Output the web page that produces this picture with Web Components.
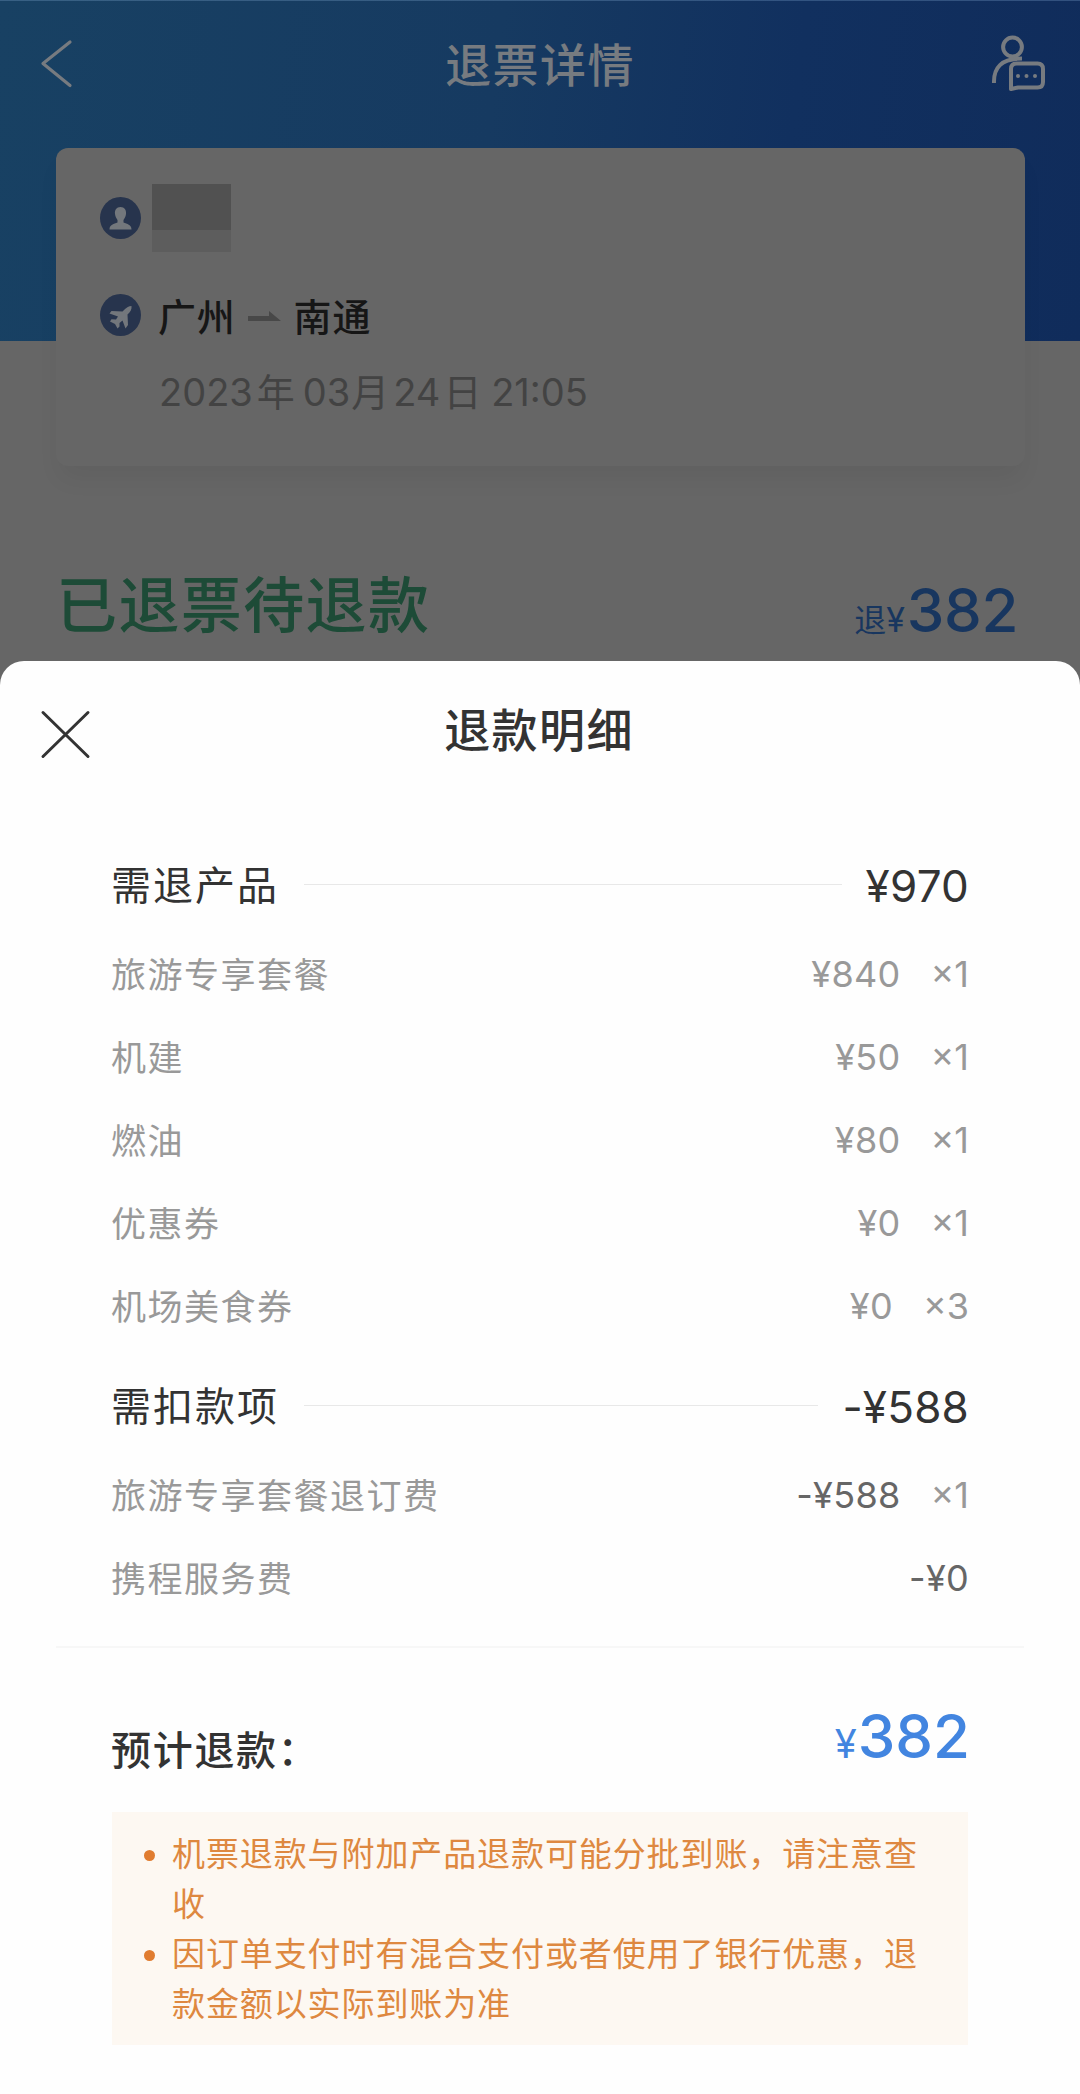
<!DOCTYPE html>
<html lang="zh-CN">
<head>
<meta charset="utf-8">
<title>退票详情</title>
<style>
  body {
    margin: 0;
    font-family: Inter, "Noto Sans CJK SC", sans-serif;
    color: #333;
  }
</style>
</head>
<body>
<refund-page>
  <page-header slot="header">退票详情</page-header>
  <trip-card slot="card">
    <span slot="from">广州</span>
    <span slot="to">南通</span>
  </trip-card>
  <refund-status slot="status" amount="382">已退票待退款</refund-status>

  <bottom-sheet heading="退款明细">
    <fee-group name="需退产品" total="¥970">
      <fee-row price="¥840" count="×1">旅游专享套餐</fee-row>
      <fee-row price="¥50" count="×1">机建</fee-row>
      <fee-row price="¥80" count="×1">燃油</fee-row>
      <fee-row price="¥0" count="×1">优惠券</fee-row>
      <fee-row price="¥0" count="×3">机场美食券</fee-row>
    </fee-group>
    <fee-group name="需扣款项" total="-¥588">
      <fee-row class="minus" price="-¥588" count="×1">旅游专享套餐退订费</fee-row>
      <fee-row class="minus" price="-¥0">携程服务费</fee-row>
    </fee-group>
    <fee-total amount="382">预计退款</fee-total>
    <notice-box>
      <notice-item>机票退款与附加产品退款可能分批到账，请注意查收</notice-item>
      <notice-item>因订单支付时有混合支付或者使用了银行优惠，退款金额以实际到账为准</notice-item>
    </notice-box>
  </bottom-sheet>
</refund-page>

<script>
// small base: puts the markup of each element in an open shadow root
class BaseElement extends HTMLElement {
  constructor() {
    super()
    this.attachShadow({ mode: "open" })
    this.shadowRoot.innerHTML = this.render()
  }

  attr(name) {
    return this.getAttribute(name) || ""
  }
}

class RefundPage extends BaseElement {
  render() {
    return `
      <style>
        :host {
          display: grid;
          grid-template-rows: 661px 1fr;
          height: 2094px;
          background: #666;
          overflow: hidden;
        }
        .back {
          display: flex;
          flex-direction: column;
          background: linear-gradient(97deg, #184163 0%, #163a61 45%, #11305f 72%, #102c5b 100%) 0 0 / 100% 341px no-repeat;
          box-shadow: inset 0 1px rgba(150, 190, 230, .25);
        }
      </style>
      <div class="back">
        <slot name="header"></slot>
        <slot name="card"></slot>
        <slot name="status"></slot>
      </div>
      <slot></slot>`
  }
}

class PageHeader extends BaseElement {
  render() {
    return `
      <style>
        :host {
          display: grid;
          flex: none;
          grid-template-columns: 120px 1fr 120px;
          align-items: center;
          height: 130px;
          margin-bottom: 18px;
          box-sizing: border-box;
          color: #777b80;
        }
        svg {
          display: block;
          fill: none;
          stroke: currentColor;
        }
        h1 {
          margin: 0;
          font-size: 46px;
          font-weight: 500;
          line-height: 60px;
          letter-spacing: 1.4px;
          text-align: center;
        }
      </style>
      <svg width="120" height="130" stroke-width="3.2" stroke-linecap="round" stroke-linejoin="round">
        <path d="M70 42 L43 63.5 L70 85.5"/>
      </svg>
      <h1><slot></slot></h1>
      <svg width="120" height="130" viewBox="960 0 120 130" stroke-width="4">
        <circle cx="1012.5" cy="47" r="9.4"/>
        <path d="M994 83 C993.5 68 1001 58.5 1022 58.5"/>
        <path stroke-linejoin="round" d="M1011 89 V69 Q1011 63.500 1016.500 63.500 H1037.500 Q1043 63.500 1043 69 V82 Q1043 87.500 1037.500 87.500 H1018 Z"/>
        <g fill="currentColor" stroke="none">
          <circle cx="1018" cy="76" r="2"/>
          <circle cx="1026.500" cy="76" r="2"/>
          <circle cx="1035" cy="76" r="2"/>
        </g>
      </svg>`
  }
}

class TripCard extends BaseElement {
  render() {
    return `
      <style>
        :host {
          display: block;
          flex: none;
          height: 318px;
          margin: 0 55px 0 56px;
          padding: 36px 0 0 44px;
          box-sizing: border-box;
          border-radius: 12px;
          background: #666;
          box-shadow: 0 16px 24px -4px rgba(0, 0, 0, .06);
        }
        .row {
          display: flex;
          align-items: center;
        }
        svg {
          display: block;
        }
        .mosaic {
          width: 79px;
          height: 68px;
          margin-left: 11px;
          background: linear-gradient(#515151 68%, #5d5d5d 68%);
        }
        .route {
          height: 56px;
          margin-top: 35px;
          font-size: 38px;
          font-weight: 500;
          letter-spacing: .8px;
          color: #161616;
        }
        .route slot {
          display: block;
          margin-bottom: 2px;
        }
        .route slot[name="from"] {
          margin-left: 17px;
        }
        .arrow {
          margin: 4px 13px 0 12px;
        }
        .date {
          margin-top: 21px;
          padding-left: 59px;
          font-size: 38px;
          line-height: 56px;
          color: #434343;
          white-space: pre;
        }
        .year {
          margin: 0 8px 0 4px;
        }
        .month {
          margin: 0 4px 0 1px;
        }
        .day {
          margin: 0 -1px 0 3px;
        }
      </style>
      <div class="row">
        <svg width="41" height="42" viewBox="0 0 41 42">
          <ellipse cx="20.500" cy="21" rx="20.500" ry="21" fill="#27344d"/>
          <path fill="#73777c" d="M20.500 10 C24.500 10 26.500 13 26 17 C25.600 20 24.500 21.500 23.500 23 V25.500 C27 27 31.500 27.500 31.500 32.500 H9.500 C9.500 27.500 14 27 17.500 25.500 V23 C16.500 21.500 15.400 20 15 17 C14.500 13 16.500 10 20.500 10 Z"/>
        </svg>
        <div class="mosaic"></div>
      </div>
      <div class="row route">
        <svg width="41" height="42" viewBox="0 0 41 42">
          <ellipse cx="20.500" cy="21" rx="20.500" ry="21" fill="#27344d"/>
          <path fill="#73777c" d="M31.500 12 C32 15 30.500 18 27.500 20.500 L28 31 L25.500 34.500 L22.500 26.500 L19.500 29 L19.500 32.500 L17.500 34.500 L15 30 L10 27.500 L11.500 25.300 L16 25.500 L18 22.500 L9.500 19.500 L11.500 17 L22.500 17.500 C26 13.500 29 12 31.500 12 Z"/>
        </svg>
        <slot name="from"></slot>
        <svg class="arrow" width="33" height="12"><path fill="#484848" d="M0 10 V5 H21 V0 L33 10 Z"/></svg>
        <slot name="to"></slot>
      </div>
      <div class="date">2023<span class="year">年</span>03<span class="month">月</span>24<span class="day">日</span> 21:05</div>`
  }
}

class RefundStatus extends BaseElement {
  render() {
    return `
      <style>
        :host {
          display: flex;
          justify-content: space-between;
          align-items: flex-start;
          margin: 95px 62px 0 56px;
          line-height: 90px;
        }
        .state {
          font-size: 61px;
          font-weight: 500;
          letter-spacing: 1.4px;
          color: #1d4b37;
        }
        .money {
          display: flex;
          align-items: baseline;
          margin-top: 4px;
          font-size: 32px;
          color: #18365f;
        }
        .yen {
          font-size: 34px;
        }
        b {
          margin-left: 2px;
          font-size: 60px;
          font-weight: 500;
          letter-spacing: -.4px;
        }
      </style>
      <span class="state"><slot></slot></span>
      <span class="money">退<span class="yen">¥</span><b>${this.attr("amount")}</b></span>`
  }
}

class BottomSheet extends BaseElement {
  render() {
    return `
      <style>
        :host {
          display: block;
          border-radius: 24px 24px 0 0;
          background: #fefefe;
        }
        header {
          display: grid;
          grid-template-columns: 120px 1fr 120px;
          align-items: center;
          height: 140px;
          margin-bottom: 38px;
        }
        h2 {
          margin: 0 2px 8px 0;
          font-size: 46px;
          font-weight: 500;
          letter-spacing: 1.4px;
          text-align: center;
        }
      </style>
      <header>
        <svg width="120" height="140" stroke="#333" stroke-width="3" stroke-linecap="round">
          <path d="M43 51.500 L88 95.500 M88 51.500 L43 95.500"/>
        </svg>
        <h2>${this.attr("heading")}</h2>
      </header>
      <slot></slot>`
  }
}

class FeeGroup extends BaseElement {
  render() {
    return `
      <style>
        :host {
          display: block;
          padding: 0 111px;
        }
        .head {
          display: flex;
          align-items: center;
          height: 93px;
        }
        .name {
          margin-bottom: 6px;
          font-size: 40px;
          letter-spacing: 2px;
        }
        .line {
          flex: 1;
          height: 1px;
          margin: 0 24px 2px 25px;
          background: #e8e8e8;
        }
        .total {
          font-size: 44px;
          letter-spacing: .2px;
        }
        .rows {
          display: block;
          padding-bottom: 13px;
        }
      </style>
      <div class="head">
        <span class="name">${this.attr("name")}</span>
        <span class="line"></span>
        <span class="total">${this.attr("total")}</span>
      </div>
      <slot class="rows"></slot>`
  }
}

class FeeRow extends BaseElement {
  render() {
    return `
      <style>
        :host {
          display: flex;
          align-items: center;
          height: 83px;
          color: #999;
          font-size: 36px;
        }
        .name {
          flex: 1;
          margin-bottom: 3px;
          font-size: 35px;
          letter-spacing: 1.5px;
        }
        .price {
          letter-spacing: .3px;
        }
        .count {
          margin-left: 30px;
        }
        .count:empty {
          display: none;
        }
        :host(.minus) .price {
          color: #666;
        }
      </style>
      <span class="name"><slot></slot></span>
      <span class="price">${this.attr("price")}</span>
      <span class="count">${this.attr("count")}</span>`
  }
}

class FeeTotal extends BaseElement {
  render() {
    return `
      <style>
        :host {
          display: flex;
          justify-content: space-between;
          height: 166px;
          margin: 14px 56px 0;
          padding: 0 54px 0 55px;
          box-sizing: border-box;
          border-top: 2px solid #f7f7f7;
        }
        .name {
          margin-top: 74px;
          font-size: 40px;
          font-weight: 500;
          line-height: 58px;
          letter-spacing: 1.7px;
        }
        .money {
          margin-top: 43px;
          font-size: 40px;
          line-height: 90px;
          color: #4285e0;
        }
        b {
          margin-left: 1px;
          font-size: 60px;
          font-weight: 500;
        }
      </style>
      <span class="name"><slot></slot>：</span>
      <span class="money">¥<b>${this.attr("amount")}</b></span>`
  }
}

class NoticeBox extends BaseElement {
  render() {
    return `
      <style>
        :host {
          display: block;
          height: 233px;
          margin: 0 112px;
          padding: 17px 40px 0 32px;
          box-sizing: border-box;
          background: #fdf8f2;
          color: #de8840;
        }
      </style>
      <slot></slot>`
  }
}

class NoticeItem extends BaseElement {
  render() {
    return `
      <style>
        :host {
          display: flex;
          font-size: 33px;
          line-height: 50px;
          letter-spacing: .9px;
        }
        i {
          flex: none;
          width: 11px;
          height: 11px;
          margin: 21px 17px 0 0;
          border-radius: 50%;
          background: #e07c30;
        }
      </style>
      <i></i>
      <span><slot></slot></span>`
  }
}

customElements.define("refund-page", RefundPage)
customElements.define("page-header", PageHeader)
customElements.define("trip-card", TripCard)
customElements.define("refund-status", RefundStatus)
customElements.define("bottom-sheet", BottomSheet)
customElements.define("fee-group", FeeGroup)
customElements.define("fee-row", FeeRow)
customElements.define("fee-total", FeeTotal)
customElements.define("notice-box", NoticeBox)
customElements.define("notice-item", NoticeItem)
</script>
</body>
</html>
